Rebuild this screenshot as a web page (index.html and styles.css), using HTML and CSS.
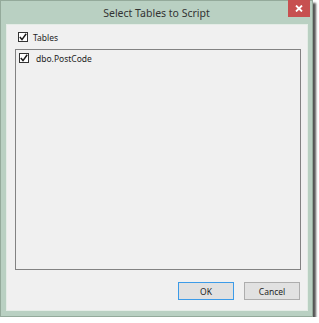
FILE: index.html
```html
<!DOCTYPE html>
<html>
<head>
<meta charset="utf-8">
<link rel="stylesheet" href="styles.css">
</head>
<body>
<div class="window">
  <div class="titlebar">
    <span class="title">Select Tables to Script</span>
    <div class="close"><svg width="8" height="7" viewBox="0 0 8 7"><path d="M1 0.5 L7 6.5 M7 0.5 L1 6.5" stroke="#fff" stroke-width="1.8"/></svg></div>
  </div>
  <div class="client">
    <label class="check-row top">
      <span class="box"><svg width="8" height="8" viewBox="0 0 8 8"><path d="M0.8 4 L3 6.6 L7.2 0.8" fill="none" stroke="#1a1a1a" stroke-width="1.5"/></svg></span>
      <span>Tables</span>
    </label>
    <div class="list">
      <label class="check-row">
        <span class="box"><svg width="8" height="8" viewBox="0 0 8 8"><path d="M0.8 4 L3 6.6 L7.2 0.8" fill="none" stroke="#1a1a1a" stroke-width="1.5"/></svg></span>
        <span>dbo.PostCode</span>
      </label>
    </div>
    <div class="buttons">
      <button class="btn default">OK</button>
      <button class="btn">Cancel</button>
    </div>
  </div>
</div>
</body>
</html>
```
FILE: styles.css
```css
html, body {
  margin: 0;
  padding: 0;
  background: #ffffff;
}
body {
  font-family: "Noto Sans", "Open Sans", sans-serif;
  color: #1e1e1e;
}
.window {
  width: 311px;
  height: 315px;
  background: #b9d0c2;
  border: 1px solid #94aa9b;
  box-shadow: 3px 3px 2px #555;
  display: flex;
  flex-direction: column;
}
.titlebar {
  height: 23px;
  position: relative;
  display: flex;
  align-items: center;
  justify-content: center;
}
.title {
  font-size: 10.5px;
  color: #333;
  margin-top: 0;
}
.close {
  position: absolute;
  right: 2px;
  top: -1px;
  width: 22px;
  height: 17px;
  background: #c75050;
  display: flex;
  align-items: center;
  justify-content: center;
}
.client {
  flex: 1;
  margin: 0 4px 5px 5px;
  background: #f0f0f0;
  border: 1px solid #e4ece6;
  display: flex;
  flex-direction: column;
  padding: 6px 6px 10px 8px;
}
.check-row {
  display: flex;
  align-items: center;
  gap: 5px;
  font-size: 8.5px;
  height: 12px;
  padding-left: 3px;
}
.box {
  width: 8px;
  height: 8px;
  border: 1px solid #333;
  background: #fff;
  display: flex;
  align-items: center;
  justify-content: center;
}
.list {
  margin-top: 6px;
  height: 221px;
  border: 1px solid #828282;
  background: #f0f0f0;
  padding: 2px 0;
  box-sizing: border-box;
}
.list .check-row {
  gap: 7px;
}
.buttons {
  margin-top: auto;
  display: flex;
  justify-content: flex-end;
  gap: 10px;
  padding-right: 1px;
}
.btn {
  width: 56px;
  height: 18px;
  font-family: "Noto Sans", "Open Sans", sans-serif;
  font-size: 8.5px;
  background: #e1e1e1;
  border: 1px solid #adadad;
  color: #1e1e1e;
  padding: 0;
}
.btn.default {
  border-color: #3c9be8;
}
```
